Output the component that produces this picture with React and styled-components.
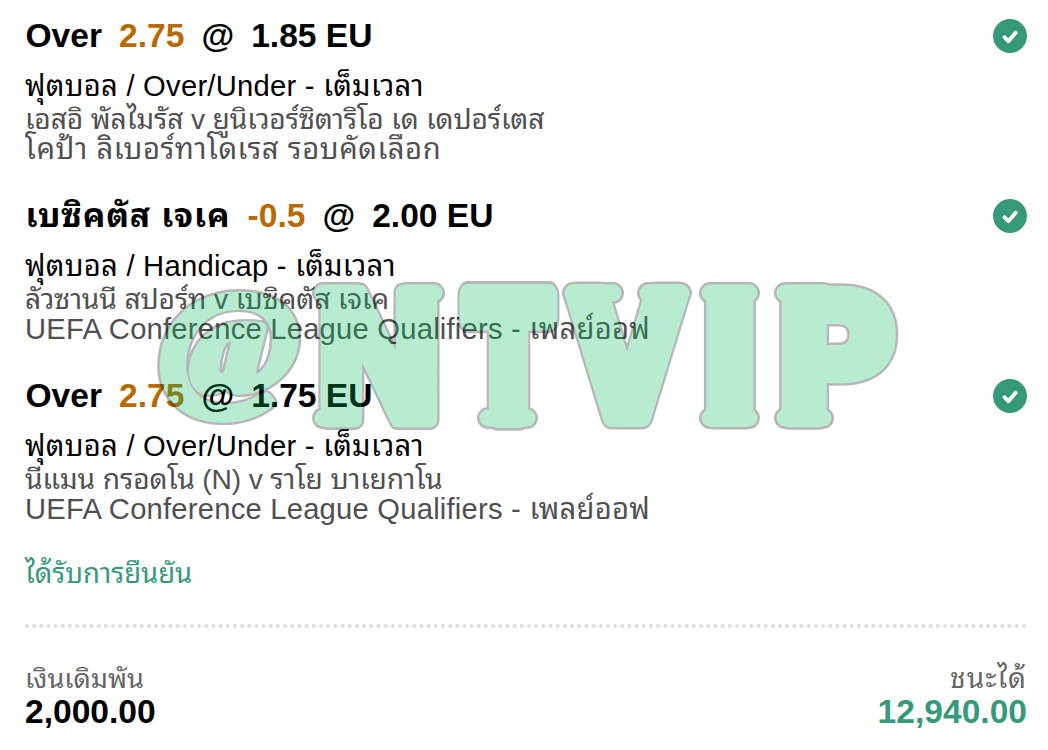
import React from "react";
import styled, { createGlobalStyle } from "styled-components";

const GlobalStyle = createGlobalStyle`
  body {
    margin: 0;
    background-color: #fff;
  }
`;

const Slip = styled.div`
  position: relative;
  width: 1048px;
  height: 750px;
  padding: 0 21px 0 25px;
  box-sizing: border-box;
  overflow: hidden;
  font-family: "Liberation Sans", Tahoma, Waree, "Noto Sans Thai Looped", Loma, Garuda, sans-serif;
  white-space: nowrap;
`;

const Bet = styled.div`
  height: 180px;
  padding-top: 12px;
  box-sizing: border-box;
`;

const Title = styled.div`
  display: flex;
  justify-content: space-between;
  align-items: center;
  height: 48px;
  margin-bottom: 8px;
  line-height: 48px;
  font-size: 33.6px;
  font-weight: bold;
  color: #000;
`;

const Pick = styled.div`
  display: flex;
  gap: 17px;
  padding-left: 0.5px;
`;

const Name = styled.span`
  letter-spacing: ${(props) => (props.$wide ? "0.9px" : "0")};
`;

const Line = styled.span`
  color: #b86a00;
`;

const Market = styled.div`
  line-height: 36px;
  font-size: 29.2px;
  letter-spacing: 0.25px;
  color: #000;
`;

const Teams = styled.div`
  line-height: 30px;
  font-size: 28.2px;
  letter-spacing: -0.14px;
  color: #505050;
`;

const League = styled.div`
  line-height: 30px;
  font-size: 29.2px;
  letter-spacing: ${(props) => (props.$wide ? "0.55px" : "0.22px")};
  color: #505050;
`;

const Status = styled.div`
  margin-top: 18px;
  line-height: 31px;
  font-size: 27.5px;
  color: #35997a;
`;

const Divider = styled.div`
  height: 4px;
  margin: 35px 0;
  background: radial-gradient(circle at 2px 2px, #dedede 1.7px, transparent 2.3px)
    0 0 / 7.18px 4px repeat-x;
`;

const Summary = styled.div`
  display: flex;
  justify-content: space-between;
`;

const Total = styled.div`
  text-align: ${(props) => (props.$right ? "right" : "left")};
`;

const Label = styled.div`
  line-height: 31px;
  font-size: ${(props) => (props.$wide ? "28px" : "27.1px")};
  letter-spacing: ${(props) => (props.$wide ? "1px" : "0")};
  color: #666;
`;

const Amount = styled.div`
  line-height: 36px;
  font-size: 33.6px;
  font-weight: bold;
  color: ${(props) => (props.$win ? "#35997a" : "#000")};
`;

const Watermark = styled.svg`
  position: absolute;
  top: 0;
  left: 0;
  opacity: 0.28;
  pointer-events: none;
`;

const Glyph = styled.text`
  font-family: ${(props) => props.$family}, serif;
  font-weight: bold;
  text-anchor: middle;
  stroke-linejoin: round;
  vector-effect: non-scaling-stroke;
`;

const letters = [
  { char: "@", x: 229, y: 389.5, size: 139, sx: 1.1, bold: 12, family: '"Liberation Serif"' },
  { char: "N", x: 379, y: 419.5, size: 175.6, sx: 0.9, bold: 14, family: '"DejaVu Sans"' },
  { char: "T", x: 508.5, y: 416, size: 165.5, sx: 0.73, bold: 20, family: '"DejaVu Sans"' },
  { char: "V", x: 627, y: 416, size: 165.5, sx: 0.83, bold: 20, family: '"DejaVu Sans"' },
  { char: "I", x: 730, y: 419.5, size: 175.6, sx: 1, bold: 14, family: '"DejaVu Sans"' },
  { char: "P", x: 834.5, y: 419.5, size: 175.6, sx: 0.955, bold: 14, family: '"DejaVu Sans"' },
];

// rounded serifs added to the stems: [x, y, width]
const serifs = [
  [314.5, 284.5, 50],
  [398.5, 284.5, 44],
  [314.5, 409.5, 46],
  [479.5, 409.5, 56],
  [564.5, 284.5, 57],
  [639.5, 284.5, 50],
  [701.5, 284.5, 56],
  [701.5, 409.5, 56],
  [776.5, 284.5, 56],
  [776.5, 409.5, 55],
];

const bets = [
  {
    name: "Over",
    line: "2.75",
    odds: "1.85 EU",
    market: "ฟุตบอล / Over/Under - เต็มเวลา",
    teams: "เอสอิ พัลไมรัส v ยูนิเวอร์ซิตาริโอ เด เดปอร์เตส",
    league: "โคป้า ลิเบอร์ทาโดเรส รอบคัดเลือก",
    wideLeague: true,
  },
  {
    name: "เบซิคตัส เจเค",
    wideName: true,
    line: "-0.5",
    odds: "2.00 EU",
    market: "ฟุตบอล / Handicap - เต็มเวลา",
    teams: "ลัวซานนี สปอร์ท v เบซิคตัส เจเค",
    league: "UEFA Conference League Qualifiers - เพลย์ออฟ",
  },
  {
    name: "Over",
    line: "2.75",
    odds: "1.75 EU",
    market: "ฟุตบอล / Over/Under - เต็มเวลา",
    teams: "นีแมน กรอดโน (N) v ราโย บาเยกาโน",
    league: "UEFA Conference League Qualifiers - เพลย์ออฟ",
  },
];

function CheckIcon() {
  return (
    <svg width="34" height="34" viewBox="0 0 34 34">
      <circle cx="17" cy="17" r="17" fill="#35997a" />
      <path
        d="M11.6 18.2l3.8 4 7.2-8.4"
        fill="none"
        stroke="#fff"
        strokeWidth="3.8"
        strokeLinecap="round"
        strokeLinejoin="round"
      />
    </svg>
  );
}

function App() {
  return (
    <>
      <GlobalStyle />
      <Slip>
        {bets.map((bet, i) => (
          <Bet key={i}>
            <Title>
              <Pick>
                <Name $wide={bet.wideName}>{bet.name}</Name>
                <Line>{bet.line}</Line>
                <span>@</span>
                <span>{bet.odds}</span>
              </Pick>
              <CheckIcon />
            </Title>
            <Market>{bet.market}</Market>
            <Teams>{bet.teams}</Teams>
            <League $wide={bet.wideLeague}>{bet.league}</League>
          </Bet>
        ))}
        <Status>ได้รับการยืนยัน</Status>
        <Divider />
        <Summary>
          <Total>
            <Label>เงินเดิมพัน</Label>
            <Amount>2,000.00</Amount>
          </Total>
          <Total $right>
            <Label $wide>ชนะได้</Label>
            <Amount $win>12,940.00</Amount>
          </Total>
        </Summary>

        <Watermark width="1048" height="750" aria-hidden="true">
          <defs>
            {letters.map((l, i) => (
              <Glyph
                key={l.char}
                id={`wm-${i}`}
                $family={l.family}
                fontSize={l.size}
                transform={`translate(${l.x} ${l.y}) scale(${l.sx} 1)`}
              >
                {l.char}
              </Glyph>
            ))}
            <g id="wm-serifs">
              {serifs.map(([x, y, width]) => (
                <rect key={`${x}-${y}`} x={x} y={y} width={width} height="17" rx="8.5" />
              ))}
            </g>
          </defs>
          {letters.map((l, i) => (
            <use key={i} href={`#wm-${i}`} stroke="#000" strokeWidth={l.bold + 5} />
          ))}
          <use href="#wm-serifs" stroke="#000" strokeWidth="5" />
          {letters.map((l, i) => (
            <use
              key={i}
              href={`#wm-${i}`}
              fill="#00be64"
              stroke="#00be64"
              strokeWidth={l.bold}
            />
          ))}
          <use href="#wm-serifs" fill="#00be64" />
        </Watermark>
      </Slip>
    </>
  );
}

export default App;
